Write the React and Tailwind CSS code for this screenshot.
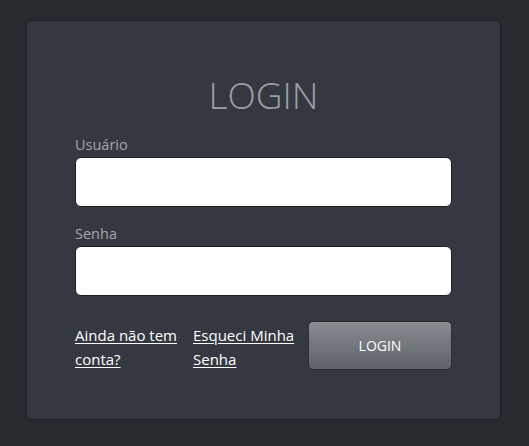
import React from 'react';

const App = () => {
  return (
    <div className="min-h-screen bg-[#272a2f] pt-[20px] pl-[26px] font-['Open_Sans',sans-serif]">
      {/* Card */}
      <div className="w-[475px] h-[400px] bg-[#343840] border border-[#1c1e22] rounded-[5px] px-[48px] pt-[50px]">
        <h1 className="text-center text-[37px] leading-[48px] font-light text-[#9ba0a6]">LOGIN</h1>

        <div className="mt-[16px]">
          <label className="block text-[14.5px] leading-[20px] text-[#a2a6ab]">Usuário</label>
          <input className="mt-[2px] block w-full h-[50px] bg-white border border-[#1c1e22] rounded-[6px] px-3 outline-none" />
        </div>

        <div className="mt-[17px]">
          <label className="block text-[14.5px] leading-[20px] text-[#a2a6ab]">Senha</label>
          <input type="password" className="mt-[2px] block w-full h-[50px] bg-white border border-[#1c1e22] rounded-[6px] px-3 outline-none" />
        </div>

        {/* Footer row */}
        <div className="mt-[25px] flex gap-[8px] items-start">
          <a href="#" className="w-[110px] pt-[2px] text-[15px] leading-[24px] text-white underline underline-offset-2">
            Ainda não tem conta?
          </a>
          <a href="#" className="w-[107px] pt-[2px] text-[15px] leading-[24px] text-white underline underline-offset-2">
            Esqueci Minha Senha
          </a>
          <button className="flex-1 h-[49px] rounded-[5px] border border-[#2a2d32] bg-gradient-to-b from-[#878c91] to-[#5f646a] text-white text-[14px]">
            LOGIN
          </button>
        </div>
      </div>
    </div>
  );
};

export default App;
